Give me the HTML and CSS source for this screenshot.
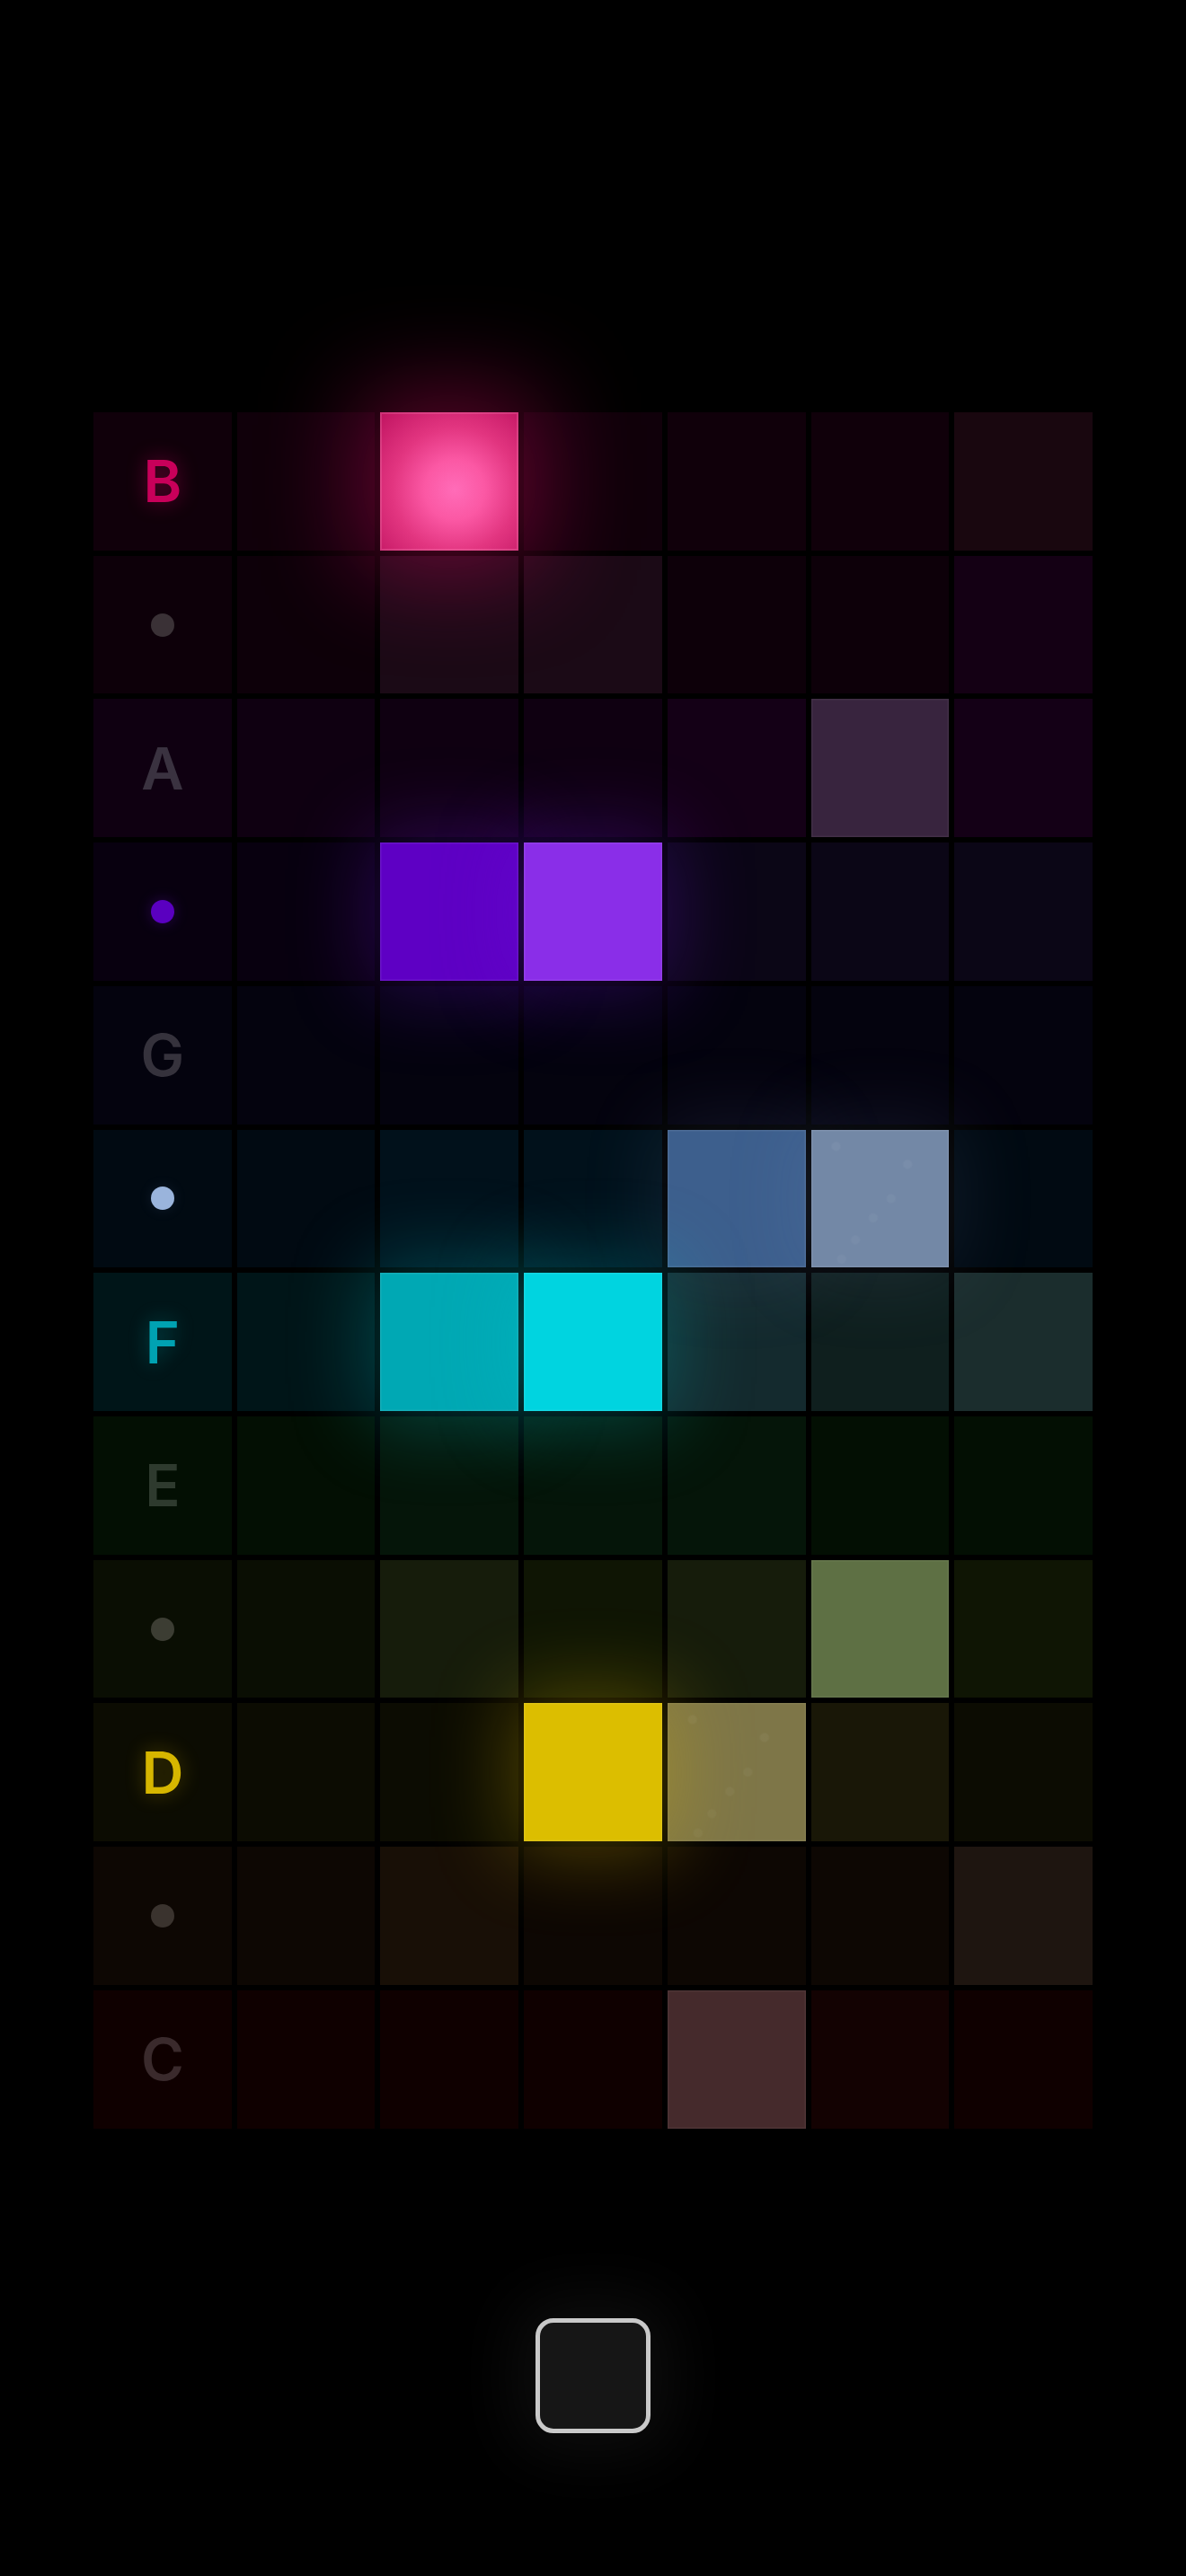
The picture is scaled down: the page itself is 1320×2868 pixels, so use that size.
FILE: index.html
```html
<!DOCTYPE html>
<html lang="en">
<head>
<meta charset="utf-8">
<title>Step Grid</title>
<link rel="stylesheet" href="styles.css">
</head>
<body>
<main class="screen">
  <div class="grid">
    <div class="row row-b">
      <div class="c"><span class="note lit">B</span></div>
      <div class="c"></div>
      <div class="c on pink"></div>
      <div class="c"></div>
      <div class="c"></div>
      <div class="c"></div>
      <div class="c t1"></div>
    </div>
    <div class="row row-as">
      <div class="c"><span class="dot"></span></div>
      <div class="c"></div>
      <div class="c t1"></div>
      <div class="c t1"></div>
      <div class="c"></div>
      <div class="c"></div>
      <div class="c t2"></div>
    </div>
    <div class="row row-a">
      <div class="c"><span class="note">A</span></div>
      <div class="c"></div>
      <div class="c"></div>
      <div class="c"></div>
      <div class="c t1"></div>
      <div class="c ghost"></div>
      <div class="c t1"></div>
    </div>
    <div class="row row-gs">
      <div class="c"><span class="dot lit"></span></div>
      <div class="c"></div>
      <div class="c on"></div>
      <div class="c on on2"></div>
      <div class="c t1"></div>
      <div class="c t1"></div>
      <div class="c t1"></div>
    </div>
    <div class="row row-g">
      <div class="c"><span class="note">G</span></div>
      <div class="c"></div>
      <div class="c"></div>
      <div class="c"></div>
      <div class="c"></div>
      <div class="c"></div>
      <div class="c"></div>
    </div>
    <div class="row row-fs">
      <div class="c"><span class="dot lit"></span></div>
      <div class="c"></div>
      <div class="c t1"></div>
      <div class="c t1"></div>
      <div class="c on"></div>
      <div class="c on on2 speck"></div>
      <div class="c"></div>
    </div>
    <div class="row row-f">
      <div class="c"><span class="note lit">F</span></div>
      <div class="c"></div>
      <div class="c on"></div>
      <div class="c on on2"></div>
      <div class="c t1"></div>
      <div class="c t2"></div>
      <div class="c t3"></div>
    </div>
    <div class="row row-e">
      <div class="c"><span class="note">E</span></div>
      <div class="c"></div>
      <div class="c t1"></div>
      <div class="c t1"></div>
      <div class="c t1"></div>
      <div class="c"></div>
      <div class="c"></div>
    </div>
    <div class="row row-ds">
      <div class="c"><span class="dot"></span></div>
      <div class="c"></div>
      <div class="c t1"></div>
      <div class="c t2"></div>
      <div class="c t1"></div>
      <div class="c ghost"></div>
      <div class="c t2"></div>
    </div>
    <div class="row row-d">
      <div class="c"><span class="note lit">D</span></div>
      <div class="c"></div>
      <div class="c"></div>
      <div class="c on"></div>
      <div class="c ghost speck"></div>
      <div class="c t1"></div>
      <div class="c"></div>
    </div>
    <div class="row row-cs">
      <div class="c"><span class="dot"></span></div>
      <div class="c"></div>
      <div class="c t1"></div>
      <div class="c"></div>
      <div class="c"></div>
      <div class="c"></div>
      <div class="c t2"></div>
    </div>
    <div class="row row-c">
      <div class="c"><span class="note">C</span></div>
      <div class="c"></div>
      <div class="c"></div>
      <div class="c"></div>
      <div class="c ghost"></div>
      <div class="c t1"></div>
      <div class="c"></div>
    </div>
  </div>
  <button class="play" type="button" aria-label="Play"></button>
</main>
</body>
</html>
```

FILE: styles.css
```css
html, body {
  margin: 0;
  padding: 0;
  background: #000;
}

body {
  font-family: Inter, "Liberation Sans", "DejaVu Sans", sans-serif;
}

.screen {
  height: 2868px;
  box-sizing: border-box;
  padding-top: 459px;
  display: flex;
  flex-direction: column;
  align-items: center;
  overflow: hidden;
}

.grid {
  width: 1112px;
  display: grid;
  grid-template-columns: repeat(7, 1fr);
  gap: 6px;
}

.row {
  display: contents;
}

.c {
  aspect-ratio: 1 / 1;
  background: var(--base);
  display: flex;
  align-items: center;
  justify-content: center;
}

.c.t1 { background: var(--t1); }
.c.t2 { background: var(--t2); }
.c.t3 { background: var(--t3); }

.c.ghost {
  background-color: var(--ghost);
  box-shadow: inset 0 0 0 1.5px rgba(255, 255, 255, 0.05);
}

.c.on {
  position: relative;
  z-index: 1;
  background-color: var(--on);
  box-shadow: 0 0 90px 12px var(--glow), inset 0 0 0 1.5px rgba(255, 255, 255, 0.08);
}

.c.on.on2 {
  background-color: var(--on2);
}

.c.on.pink {
  background: radial-gradient(circle at 54% 56%, #ff6cb8 0%, #fb58a4 28%, #e23580 58%, #bf1360 100%);
  box-shadow: 0 0 110px 22px var(--glow), inset 0 0 0 2px rgba(255, 160, 200, 0.22);
}

.c.speck {
  background-image:
    radial-gradient(circle at 18% 12%, rgba(255, 255, 255, 0.045) 0 4px, transparent 6px),
    radial-gradient(circle at 70% 25%, rgba(255, 255, 255, 0.045) 0 4px, transparent 6px),
    radial-gradient(circle at 58% 50%, rgba(255, 255, 255, 0.04) 0 4px, transparent 6px),
    radial-gradient(circle at 45% 64%, rgba(255, 255, 255, 0.04) 0 4px, transparent 6px),
    radial-gradient(circle at 32% 80%, rgba(255, 255, 255, 0.035) 0 4px, transparent 6px),
    radial-gradient(circle at 22% 94%, rgba(255, 255, 255, 0.035) 0 4px, transparent 6px);
}

.note {
  font-size: 65px;
  font-weight: 600;
  line-height: 1;
  color: var(--label-dim, rgba(255, 255, 255, 0.17));
}

.note.lit {
  color: var(--label);
  text-shadow: 0 0 22px var(--glow);
}

.dot {
  width: 26px;
  height: 26px;
  border-radius: 50%;
  background: var(--label-dim, rgba(255, 255, 255, 0.19));
}

.dot.lit {
  background: var(--label);
  box-shadow: 0 0 16px var(--glow);
}

/* Row palettes, top (B) to bottom (C) */
.row-b {
  --base: #10000a;
  --t1: #19070f;
  --label: #c8005a;
  --glow: rgba(220, 10, 100, 0.42);
}

.row-as {
  --base: #0d0009;
  --t1: #1b0a16;
  --t2: #140014;
  --label-dim: #3a3136;
}

.row-a {
  --base: #0f0011;
  --t1: #140016;
  --ghost: #38243e;
  --label-dim: #3a3240;
}

.row-gs {
  --base: #08000f;
  --t1: #0b0616;
  --on: #5e00c4;
  --on2: #8a2ee8;
  --label: #5a00c0;
  --glow: rgba(110, 20, 220, 0.3);
}

.row-g {
  --base: #04030e;
  --label-dim: #35323c;
}

.row-fs {
  --base: #010a12;
  --t1: #01111b;
  --on: #3d5f8d;
  --on2: #7388a6;
  --label: #9ab4dc;
  --glow: rgba(130, 160, 210, 0.12);
}

.row-f {
  --base: #001518;
  --t1: #142a2e;
  --t2: #0f1f1e;
  --t3: #1b2d2d;
  --on: #00a8b4;
  --on2: #00d4e0;
  --label: #00a2b2;
  --glow: rgba(0, 200, 210, 0.28);
}

.row-e {
  --base: #030f03;
  --t1: #051509;
  --label-dim: #2e3a2e;
}

.row-ds {
  --base: #0a0e03;
  --t1: #161c0b;
  --t2: #0f1504;
  --ghost: #5e7044;
  --label-dim: #3c3d33;
}

.row-d {
  --base: #0c0c02;
  --t1: #191707;
  --on: #dcbe00;
  --ghost: #7e7648;
  --label: #d6b600;
  --glow: rgba(220, 185, 0, 0.32);
}

.row-cs {
  --base: #0d0703;
  --t1: #180f06;
  --t2: #1e1510;
  --label-dim: #3a332e;
}

.row-c {
  --base: #0f0000;
  --t1: #130202;
  --ghost: #452a2c;
  --label-dim: #3a2a2c;
}

.play {
  margin-top: 211px;
  width: 128px;
  height: 128px;
  padding: 0;
  box-sizing: border-box;
  border: 5px solid #c9c9c9;
  border-radius: 20px;
  background: #161616;
  box-shadow: 0 0 70px 24px rgba(255, 255, 255, 0.05);
  cursor: pointer;
}
```
